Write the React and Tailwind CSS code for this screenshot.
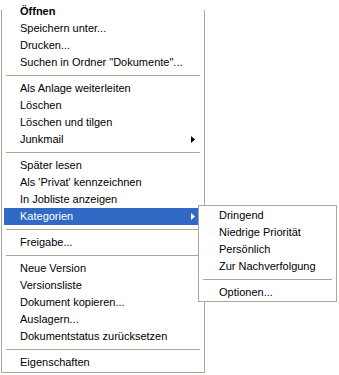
import React from 'react';

const Arrow = ({ white }) => (
  <svg width="4" height="7" viewBox="0 0 4 7" className="absolute right-[7px] top-[5px]">
    <path d="M0 0 L4 3.5 L0 7 Z" fill={white ? '#ffffff' : '#000000'} />
  </svg>
);

const Item = ({ label, bold, arrow, active }) => (
  <div
    className={`relative h-[17px] pl-4 leading-[17px] whitespace-nowrap ${active ? 'bg-[#316ac5] text-white' : 'text-black'} ${bold ? 'font-bold' : ''}`}
  >
    {label}
    {arrow && <Arrow white={active} />}
  </div>
);

const Sep = () => (
  <div className="h-[9px] flex items-center pl-[2px] pr-[2px]">
    <div className="h-px w-full bg-[#aca899]" />
  </div>
);

const SubMenu = () => (
  <div className="absolute left-[198px] top-[205px] w-[139px] bg-white border border-[#aca899] pt-px pl-[2px] pr-[2px]">
    <div className="pl-[18px] h-[17px] leading-[17px]">Dringend</div>
    <div className="pl-[18px] h-[17px] leading-[17px]">Niedrige Priorität</div>
    <div className="pl-[18px] h-[17px] leading-[17px]">Persönlich</div>
    <div className="pl-[18px] h-[17px] leading-[17px]">Zur Nachverfolgung</div>
    <Sep />
    <div className="pl-[18px] h-[17px] leading-[17px]">Optionen...</div>
  </div>
);

export default function App() {
  return (
    <div className="relative w-[339px] h-[375px] bg-white text-[11px] font-['Liberation_Sans',Arial,sans-serif]">
      <div className="relative ml-px w-[204px] border-x border-b border-[#aca899] bg-white pt-[3px] pb-px px-[2px]">
        <span className="absolute left-[-1px] top-0 w-px h-[10px] bg-white" />
        <span className="absolute right-[-1px] top-0 w-px h-[10px] bg-white" />
        <Item label="Öffnen" bold />
        <Item label="Speichern unter..." />
        <Item label="Drucken..." />
        <Item label={'Suchen in Ordner "Dokumente"...'} />
        <Sep />
        <Item label="Als Anlage weiterleiten" />
        <Item label="Löschen" />
        <Item label="Löschen und tilgen" />
        <Item label="Junkmail" arrow />
        <Sep />
        <Item label="Später lesen" />
        <Item label="Als 'Privat' kennzeichnen" />
        <Item label="In Jobliste anzeigen" />
        <Item label="Kategorien" arrow active />
        <Sep />
        <Item label="Freigabe..." />
        <Sep />
        <Item label="Neue Version" />
        <Item label="Versionsliste" />
        <Item label="Dokument kopieren..." />
        <Item label="Auslagern..." />
        <Item label="Dokumentstatus zurücksetzen" />
        <Sep />
        <Item label="Eigenschaften" />
      </div>
      <SubMenu />
    </div>
  );
}
